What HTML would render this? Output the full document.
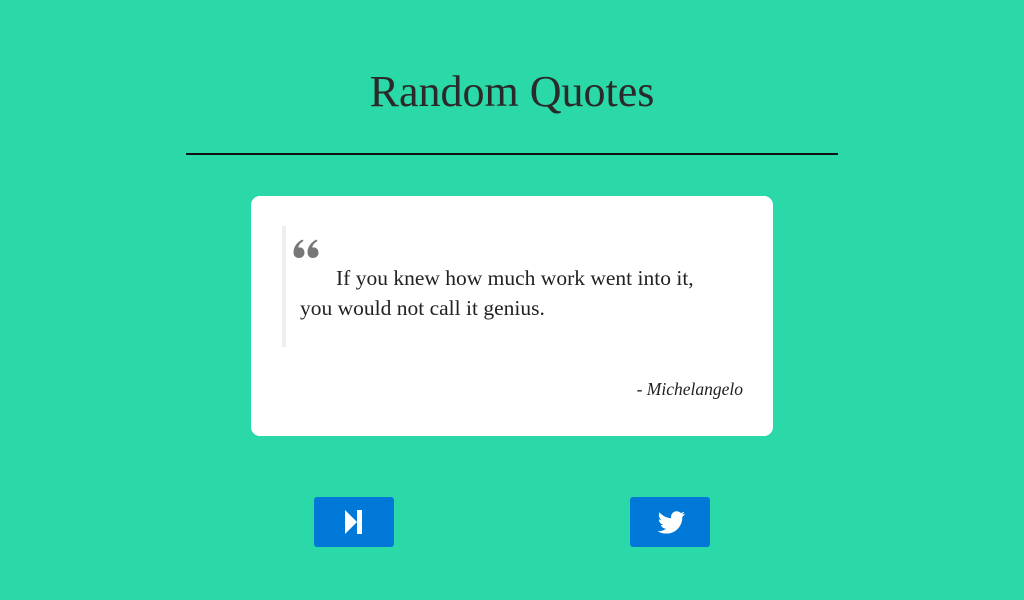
<!DOCTYPE html>
<html><head><meta charset="utf-8"><style>
html,body{margin:0;padding:0;width:1024px;height:600px;overflow:hidden;background:#2bd8a7;font-family:"Liberation Serif",serif;}
h1{position:absolute;left:0;width:1024px;top:67px;margin:0;text-align:center;font-weight:normal;font-size:44px;line-height:50px;color:#2a2a2a;}
.line{position:absolute;left:186px;top:153px;width:652px;height:2px;background:#111;}
.card{position:absolute;left:251px;top:196px;width:522px;height:240px;background:#fff;border-radius:9px;}
.bq{position:absolute;left:31px;top:30px;width:440px;height:121px;border-left:4px solid #eceeef;}
.qm{position:absolute;left:7px;top:13px;}
.txt{position:absolute;left:14px;top:37px;width:460px;font-size:21.5px;line-height:30px;color:#222;text-indent:36px;white-space:nowrap;}
.auth{position:absolute;right:30px;top:183px;font-size:17.5px;font-style:italic;color:#222;}
.btn{position:absolute;top:497px;width:80px;height:50px;background:#0078d7;border-radius:3px;}
</style></head><body>
<h1>Random Quotes</h1>
<div class="line"></div>
<div class="card">
  <div class="bq">
    <svg class="qm" width="28" height="20" viewBox="0 0 28 20"><g fill="#777">
      <path d="M6 19 C2.5 19 0.5 16.5 0.5 13.5 C0.5 8 4 3 9.5 0.5 L10.5 2 C7 4 5.5 6.5 5.3 8.6 C5.5 8.5 6 8.4 6.5 8.4 C9.5 8.4 11.5 10.7 11.5 13.7 C11.5 16.7 9.2 19 6 19 Z"/>
      <path d="M20 19 C16.5 19 14.5 16.5 14.5 13.5 C14.5 8 18 3 23.5 0.5 L24.5 2 C21 4 19.5 6.5 19.3 8.6 C19.5 8.5 20 8.4 20.5 8.4 C23.5 8.4 25.5 10.7 25.5 13.700 C25.5 16.7 23.2 19 20 19 Z"/>
    </g></svg>
    <div class="txt">If you knew how much work went into it,<br>you would not call it genius.</div>
  </div>
  <div class="auth">- Michelangelo</div>
</div>
<div class="btn" style="left:314px"><svg width="80" height="50"><path d="M31 13 L31 37 L43 25 Z M43 13 L48 13 L48 37 L43 37 Z" fill="#fff"/></svg></div>
<div class="btn" style="left:630px"><svg width="80" height="50" viewBox="0 0 80 50"><path fill="#fff" transform="translate(40,25) scale(1.08) translate(-40,-25)" d="M54 17.5c-1 .4-2 .7-3 .8 1.1-.7 1.9-1.7 2.3-2.9-1 .6-2.1 1-3.3 1.3-1-1-2.3-1.600-3.8-1.6-2.9 0-5.2 2.3-5.200 5.2 0 .4 0 .8.1 1.2-4.3-.2-8.200-2.300-10.700-5.400-.5.8-.7 1.7-.7 2.6 0 1.8.9 3.4 2.3 4.3-.9 0-1.7-.3-2.4-.6v.1c0 2.5 1.8 4.6 4.2 5.1-.4.1-.9.2-1.4.2-.3 0-.7 0-1-.1.7 2 2.6 3.5 4.9 3.6-1.8 1.4-4 2.2-6.5 2.2-.4 0-.8 0-1.200-.1 2.3 1.5 5.1 2.3 8 2.3 9.6 0 14.8-7.9 14.8-14.8v-.7c1-.7 1.900-1.600 2.600-2.700z"/></svg></div>
</body></html>
